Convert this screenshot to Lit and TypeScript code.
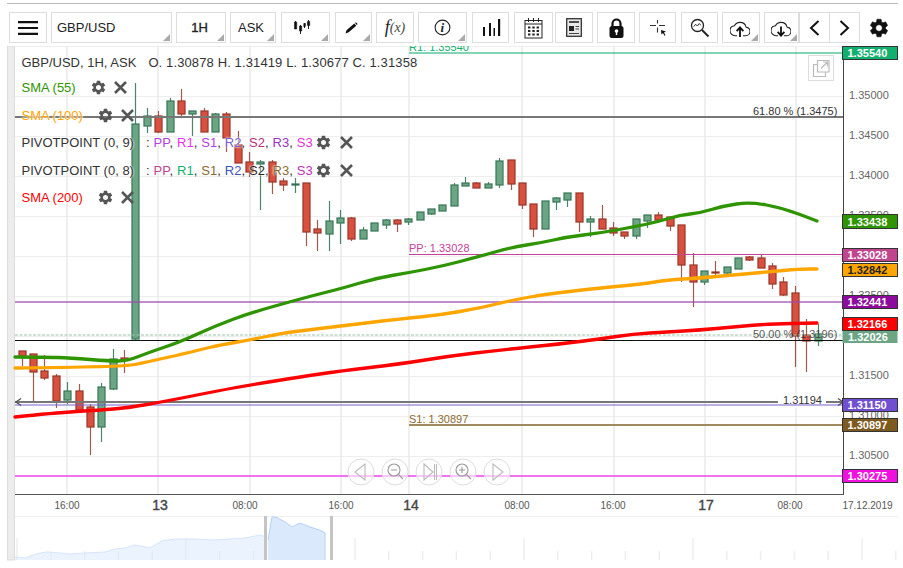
import { LitElement, html, css, svg } from "lit";
import { customElement } from "lit/decorators.js";

type Candle = [number, number, number, number, number];
// dir (1 up / 0 down), wickTop, wickBottom, bodyTop, bodyBottom
const CANDLES: Candle[] = [
  [0,351,366,351,356],[0,354,403,354,372],[0,355,380,371,378],[0,374,408,376,401],[1,382,404,391,400],
  [0,384,410,391,410],[0,404,455,407,427],[1,383,442,387,427],[1,349,390,359,389],[0,350,373,358,360],
  [1,83,340,124,339],[1,108,133,116,126],[0,111,133,116,132],[1,98,132,101,132],[0,89,116,101,114],
  [1,111,136,111,114],[0,108,132,111,132],[1,113,132,114,132],[0,112,152,114,138],[0,131,163,145,163],
  [0,152,177,162,172],[1,160,210,162,164],[0,160,194,162,182],[0,178,191,181,185],[1,178,193,184,185],
  [0,183,246,183,232],[0,220,251,229,233],[1,201,251,221,234],[1,210,244,218,223],[0,217,241,218,239],
  [1,227,239,230,239],[1,223,231,223,231],[1,219,229,220,225],[0,219,232,220,224],[1,218,225,219,222],
  [1,212,220,212,220],[1,209,215,209,214],[1,205,211,205,211],[1,183,206,185,206],[1,177,186,183,186],
  [0,182,188,183,188],[1,182,188,184,188],[1,158,188,161,185],[0,160,190,160,184],[0,183,209,183,205],
  [0,204,237,204,229],[1,201,229,201,229],[1,197,210,198,202],[1,193,207,193,200],[0,193,232,193,222],
  [1,216,237,219,222],[0,205,229,219,229],[0,222,236,228,233],[0,232,239,232,236],[1,219,239,219,236],
  [1,215,228,215,221],[0,212,220,215,220],[0,217,231,217,226],[0,225,282,225,265],[0,253,307,265,282],
  [1,271,285,271,282],[0,261,277,272,273],[1,267,276,267,273],[1,258,269,258,269],[0,256,261,257,260],
  [0,255,268,258,268],[0,263,289,266,284],[0,277,296,282,295],[0,286,367,293,336],[0,319,372,335,341],
  [1,324,346,334,341],
];
const SMA55 = "15,357 45,357 70,358 110,361 127,361 150,352 180,342 215,326 250,313 300,299 327,292 343,288 377,278 407,273 443,266 477,257 513,247 540,243 567,237 600,233 633,227 657,222 680,215 700,213 723,206 750,202 783,208 817,221";
const SMA100 = "15,368 123,367 147,362 187,353 203,349 220,345 250,340 283,333 300,331 340,326 400,319 440,315 480,308 513,300 547,294 600,288 643,284 667,280 700,278 733,275 767,272 800,269 817,269";
const SMA200 = "15,417 53,413 100,410 127,408 167,401 217,391 250,385 300,377 340,371 400,364 450,356 500,350 560,344 600,339 633,334 667,332 700,330 733,327 767,324 817,323";
const VGRID = [67, 158, 250, 341, 409, 522, 614, 705, 796];
const PRICES = [
  ["1.35000", 96], ["1.34500", 136], ["1.34000", 176], ["1.33500", 216], ["1.33000", 256],
  ["1.32500", 296], ["1.32000", 336], ["1.31500", 376], ["1.31000", 416], ["1.30500", 456],
] as [string, number][];
const TAGS = [
  ["1.35540", 46, 14, "#12b06f", "#fff"], ["1.33438", 214, 15, "#2e9400", "#fff"],
  ["1.33028", 248, 14, "#c0448e", "#fff"], ["1.32842", 263, 14, "#ffa500", "#222"],
  ["1.32441", 295, 14, "#8e0a9e", "#fff"], ["1.31150", 398, 14, "#7050d0", "#fff"],
  ["1.30897", 418, 14, "#7d5a20", "#fff"], ["1.30275", 469, 14, "#f010e0", "#fff"],
] as [string, number, number, string, string][];
const TIMES = [["16:00", 67], ["08:00", 245], ["16:00", 341], ["08:00", 517], ["16:00", 613], ["08:00", 790]] as [string, number][];
const DAYS = [["13", 160], ["14", 411], ["17", 706]] as [string, number][];
const GEAR = "M19.14 12.94c.04-.3.06-.61.06-.94 0-.32-.02-.64-.07-.94l2.03-1.58a.49.49 0 0 0 .12-.61l-1.92-3.32a.488.488 0 0 0-.59-.22l-2.39.96c-.5-.38-1.03-.7-1.62-.94l-.36-2.54a.484.484 0 0 0-.48-.41h-3.84c-.24 0-.43.17-.47.41l-.36 2.54c-.59.24-1.13.57-1.62.94l-2.39-.96c-.22-.08-.47 0-.59.22L2.74 8.87c-.12.21-.08.47.12.61l2.03 1.58c-.05.3-.09.63-.09.94s.02.64.07.94l-2.03 1.58a.49.49 0 0 0-.12.61l1.92 3.32c.12.22.37.29.59.22l2.39-.96c.5.38 1.03.7 1.62.94l.36 2.54c.05.24.24.41.48.41h3.84c.24 0 .44-.17.47-.41l.36-2.54c.59-.24 1.13-.56 1.62-.94l2.39.96c.22.08.47 0 .59-.22l1.92-3.32c.12-.22.07-.47-.12-.61l-2.01-1.58zM12 15.6c-1.98 0-3.6-1.62-3.6-3.6s1.62-3.6 3.6-3.6 3.6 1.62 3.6 3.6-1.62 3.6-3.6 3.6z";
const CLOUD = "M19.35 10.04C18.67 6.59 15.64 4 12 4 9.11 4 6.6 5.64 5.35 8.04 2.34 8.36 0 10.91 0 14c0 3.31 2.69 6 6 6h2.5M15.5 20H19c2.76 0 5-2.24 5-5 0-2.64-2.05-4.78-4.65-4.96";
const AREA_L = "15,557 26,558 36,554 46,552 60,553 70,554 85,553 105,552 115,549 125,548 135,545 150,548 162,541 175,539 195,539 215,540 245,538 260,535 266,537";
const AREA_R = "268,540 272,517 276,517 285,522 292,527 300,523 310,527 320,530 325,533 325,560";

/** Turns a point list into a path rounded through the segment midpoints. */
const smooth = (pts: string) => {
  const p = pts.split(" ").map((s) => s.split(",").map(Number));
  let d = `M${p[0][0]} ${p[0][1]}`;
  for (let i = 1; i < p.length - 1; i++) {
    const mx = (p[i][0] + p[i + 1][0]) / 2;
    const my = (p[i][1] + p[i + 1][1]) / 2;
    d += `Q${p[i][0]} ${p[i][1]} ${mx} ${my}`;
  }
  const last = p[p.length - 1];
  return `${d}L${last[0]} ${last[1]}`;
};

const gear = () => html`<svg class="lg-gear" viewBox="0 0 24 24"><path d=${GEAR}></path></svg>`;
const cross = () => html`<svg class="lg-x" viewBox="0 0 13 13"><path d="M1 1L12 12M12 1L1 12"></path></svg>`;
const pivots = (cols: string[]) => {
  const names = ["PP", "R1", "S1", "R2", "S2", "R3", "S3"];
  return html`<span class="sep">:</span><span class="names">${names.map(
    (n, i) => html`<span style="color:${cols[i]}">${n}</span>${i < 6 ? ", " : ""}`
  )}</span>`;
};

@customElement("app-root")
export class AppRoot extends LitElement {
  static styles = css`
    :host { display: block; width: 903px; height: 568px; background: #fff; overflow: hidden;
      font-family: "Liberation Sans", Arial, sans-serif; padding-top: 3px; box-sizing: border-box; }
    .bar { display: flex; align-items: flex-start; margin-left: 7px; width: 891px; box-sizing: border-box;
      border-top: 1px solid #bbb; padding: 8px 0 0 2px; height: 43px; }
    .btn { position: relative; box-sizing: border-box; height: 31px; border: 1px solid #ddd; margin-right: 4px;
      display: flex; align-items: center; justify-content: center; font-size: 13px; color: #222; flex: none; background: #fff; }
    .btn svg { display: block; }
    .tri::after { content: ""; position: absolute; right: 1px; bottom: 1px; width: 0; height: 0;
      border-left: 7px solid transparent; border-bottom: 7px solid #aaa; }
    .left { justify-content: flex-start; padding-left: 5px; }
    .bold { -webkit-text-stroke: .35px #222; padding-right: 3px; }
    .ask { padding-right: 4px; }
    .fx { font-family: "Liberation Serif", serif; font-style: italic; font-size: 18px; }
    .fx span { font-size: 14px; color: #444; }
    .tight { margin-right: 0; }
    .plain { border: none; margin: 0; }
    .stage { position: relative; width: 903px; height: 522px; }
    .chart { display: block; position: absolute; left: 0; top: 0; }
    .legend { position: absolute; left: 21.5px; top: 4px; font-size: 13px; color: #333; white-space: nowrap;
      display: flex; flex-direction: column; text-shadow: 0 0 2px #fff, 0 0 2px #fff; }
    .row { height: 27.5px; display: flex; align-items: center; white-space: pre; }
    .top { height: 24px; }
    .ohlc { margin-left: 12px; letter-spacing: .12px; }
    .lg-gear { width: 17px; height: 17px; fill: #555; flex: none; }
    .lg-x { width: 13px; height: 13px; fill: none; stroke: #555; stroke-width: 2.6; flex: none; margin-left: 7px; }
    .m55 { margin-left: 14px; }
    .m100 { margin-left: 14px; }
    .mp { margin-left: 2px; margin-right: 0; }
    .mp + .lg-gear + .lg-x { margin-left: 8px; }
    .sep { margin-left: 12px; margin-right: 4px; }
    .names { letter-spacing: .1px; }
    .sma55 { color: #2e9400; } .sma100 { color: #ffa500; } .sma200 { color: #f00; }
    .gl { stroke: #eee; stroke-width: 1; fill: none; }
    .glv { stroke: #eaeaea; stroke-width: 1.5; fill: none; }
    .ax { font-size: 11px; fill: #666; }
    .tm { font-size: 10px; fill: #555; text-anchor: middle; }
    .dy { font-size: 14px; fill: #444; stroke: #444; stroke-width: .4; text-anchor: middle; }
    .tag { font-size: 11px; font-weight: bold; }
    .nt { font-size: 11px; }
    .sma { fill: none; stroke-width: 3.3; stroke-linejoin: round; stroke-linecap: round; }
    .zb { fill: rgba(255,255,255,.6); stroke: #ddd; }
    .zi { fill: none; stroke: #bbb; stroke-width: 1.1; }
    .zm { fill: none; stroke: #999; stroke-width: 1.1; }
    .ex { fill: #fff; stroke: #ddd; }
    .exi { fill: none; stroke: #bbb; stroke-width: 1.2; }
    .tick { stroke: #eee; stroke-width: 1.5; }
    .info { font-family: "Liberation Serif", serif; font-style: italic; font-weight: bold; font-size: 13px; fill: #222; text-anchor: middle; }
  `;

  private hline(y: number, x1: number, color: string, w = 1, op = 1) {
    return svg`<line x1=${x1} x2="843" y1=${y} y2=${y} stroke=${color} stroke-width=${w} opacity=${op}></line>`;
  }

  private chart() {
    const xOf = (i: number) => Math.round(21.7 + 11.37 * i);
    return svg`
      <svg class="chart" width="903" height="522" viewBox="0 46 903 522">
        <rect x="7.5" y="46" width="7" height="514" fill="#ececec" stroke="#ddd"></rect>
        <line class="gl" x1="15" x2="843" y1="46.5" y2="46.5"></line>
        ${PRICES.map(([, y]) => svg`<line class="gl" x1="15" x2="843" y1=${y + 0.5} y2=${y + 0.5}></line>`)}
        ${VGRID.map((x) => svg`<line class="glv" x1=${x} x2=${x} y1="46" y2="494"></line>`)}

        ${CANDLES.map((c, i) => {
          const x = xOf(i) + 0.5;
          const up = c[0] === 1;
          const h = Math.max(c[4] - c[3], 1);
          return svg`
            <line x1=${x} x2=${x} y1=${c[1]} y2=${c[2]} stroke=${up ? "#2f6e50" : "#8a4035"} stroke-width="1.2" opacity=".85"></line>
            <rect x=${x - 4.5} y=${c[3] - 1} width="9" height=${h + 2} fill=${up ? "#6ba583" : "#d9503f"} opacity=".25"></rect>
            <rect x=${x - 3.5} y=${c[3]} width="7" height=${h} fill=${up ? "#6ba583" : "#d9503f"} stroke=${up ? "#2f6e50" : "#8c3327"} stroke-width="1"></rect>`;
        })}

        ${this.hline(53, 409, "#12b06f", 1.5, 0.7)}
        ${this.hline(117, 15, "#777", 2)}
        ${this.hline(254.5, 409, "#c8409a", 1)}
        ${this.hline(302, 15, "#a04ab0", 1.5, 0.85)}
        <line x1="15" x2="843" y1="335" y2="335" stroke="#9cc4ac" stroke-dasharray="3 1.5" stroke-width="1.2"></line>
        ${this.hline(340.5, 15, "#111", 1)}
        ${this.hline(402, 15, "#777", 2)}
        ${this.hline(405, 15, "#7a5fd0", 1.2)}
        ${this.hline(425, 409, "#a08a5f", 2)}
        ${this.hline(476, 15, "#ee44ee", 1.5)}

        <rect x="778" y="396" width="48" height="12" fill="#fff"></rect>
        <line x1="778" x2="826" y1="405" y2="405" stroke="#7a5fd0" stroke-width="1.2"></line>
        <path d="M21 398.5L16 402L21 405.5" fill="none" stroke="#555" stroke-width="1.4"></path>
        <path d="M838 398.5L843 402L838 405.5" fill="none" stroke="#555" stroke-width="1.4"></path>

        <path class="sma" d=${smooth(SMA100)} stroke="#ffa500"></path>
        <path class="sma" d=${smooth(SMA55)} stroke="#2e9400"></path>
        <path class="sma" d=${smooth(SMA200)} stroke="#f00"></path>

        <text class="nt" x="409" y="51" fill="#12b06f">R1: 1.35540</text>
        <text class="nt" x="409" y="252" fill="#c8409a">PP: 1.33028</text>
        <text class="nt" x="409" y="423" fill="#8a6a2d">S1: 1.30897</text>
        <text class="nt" x="753" y="115" fill="#333">61.80 % (1.3475)</text>
        <text class="nt" x="753" y="338" fill="#333" opacity=".8">50.00 % (1.3196)</text>
        <text class="nt" x="783" y="404" fill="#333">1.31194</text>

        <rect class="ex" x="808.5" y="55.5" width="25" height="25"></rect>
        <path class="exi" d="M817.5 64.5h-4v12h12v-4M817.5 60.5h11.5v11.5h-11.5zM821 68.5l6-6M823 62h4.5v4.5"></path>

        ${[361, 395, 429, 463, 497].map((cx) => svg`<circle class="zb" cx=${cx} cy="472" r="13"></circle>`)}
        <path class="zi" d="M365 464l-10 8l10 8z"></path>
        <circle class="zm" cx="394" cy="470" r="6"></circle>
        <path class="zm" d="M391 470h6M398.5 474.5l4.5 4.5"></path>
        <path class="zi" d="M424 464l9 8l-9 8zM434.5 464v16M436.5 464v16"></path>
        <circle class="zm" cx="462" cy="470" r="6"></circle>
        <path class="zm" d="M459 470h6M462 467v6M466.5 474.5l4.5 4.5"></path>
        <path class="zi" d="M493 464l10 8l-10 8z"></path>

        <line x1="843.5" x2="843.5" y1="46" y2="494.5" stroke="#444"></line>
        <line x1="15" x2="844" y1="494.5" y2="494.5" stroke="#555"></line>

        ${PRICES.map(([t, y]) => svg`<text class="ax" x="849" y=${y + 3}>${t}</text>`)}
        <rect x="842.5" y="331" width="55" height="12" fill="#6ba583"></rect>
        <text class="tag" x="848" y="341" fill="#fff">1.32026</text>
        ${TAGS.map(([t, y, h, bg, fg]) => svg`
          <rect x="842.5" y=${y + 0.5} width="55" height=${h - 1} fill=${bg} stroke="#333"></rect>
          <text class="tag" x="847.5" y=${y + h / 2 + 4} fill=${fg}>${t}</text>`)}
        <rect x="842.5" y="317.5" width="55" height="13" fill="#f00" stroke="#333"></rect>
        <text class="tag" x="847.5" y="328" fill="#fff">1.32166</text>

        ${TIMES.map(([t, x]) => svg`<text class="tm" x=${x} y="509">${t}</text>`)}
        ${DAYS.map(([t, x]) => svg`<text class="dy" x=${x} y="510">${t}</text>`)}
        <text class="tm" x="867.5" y="509">17.12.2019</text>

        <line x1="15" x2="898" y1="516.5" y2="516.5" stroke="#eee"></line>
        ${[17, 50.8, 84.6, 118.4, 152.2, 186, 219.8, 253.6, 287.4, 321.2, 355, 388.8, 422.6, 456.4, 490.2, 524, 557.8, 591.6, 625.4, 659.2, 693, 726.8, 760.6, 794.4, 828.2, 862, 895.8].map(
          (x, i) => svg`<line class="tick" x1=${x} x2=${x} y1=${i % 5 === 0 ? 538 : 551} y2="560"></line>`
        )}
        <polygon points="${AREA_L} 266,560 15,560" fill="#dbe9fd" opacity=".55"></polygon>
        <polyline points=${AREA_L} fill="none" stroke="#d6e5fb" stroke-width="1"></polyline>
        <polygon points="${AREA_R} 268,560" fill="#dbe9fd"></polygon>
        <polyline points=${AREA_R} fill="none" stroke="#b4d0f7" stroke-width="1"></polyline>
        <rect x="264" y="516" width="3" height="44" fill="#c4c4c4"></rect>
        <rect x="330" y="516" width="3" height="44" fill="#c4c4c4"></rect>
      </svg>`;
  }

  render() {
    return html`
      <div class="bar">
        <div class="btn" style="width:38px">
          <svg width="20" height="14" viewBox="0 0 20 14"><path d="M0 1.2H20M0 7H20M0 12.8H20" stroke="#111" stroke-width="2.2"></path></svg>
        </div>
        <div class="btn left tri" style="width:121px">GBP/USD</div>
        <div class="btn bold tri" style="width:50px">1H</div>
        <div class="btn ask tri" style="width:46px;margin-right:5px">ASK</div>
        <div class="btn tri" style="width:49px;margin-right:5px">
          <svg width="18" height="18" viewBox="0 0 18 18" style="margin-right:7px"><path d="M2.5 2v8M7.5 6v9M11.5 4v5M15.5 1v9" stroke="#222" stroke-width="1"></path><path d="M1.5 3h2.2v7H1.5zM6.5 7h2.2v5H6.5zM10.8 4.5h1.6v3h-1.6zM14.5 2.5h2.2v4h-2.2z" fill="#111" stroke="#111" stroke-width=".6"></path></svg>
        </div>
        <div class="btn tri" style="width:37px">
          <svg width="13" height="12" viewBox="0 0 13 12" style="margin-right:4px"><path d="M.5 11.5l1-3.2L9.3 1.6l2 2.2-7.6 6.5zM10 .9l1-.6 1.6 1.8-.7.9z" fill="#111"></path></svg>
        </div>
        <div class="btn fx" style="width:38px">f<span>(x)</span></div>
        <div class="btn tri" style="width:49px;margin-right:5px">
          <svg width="17" height="17" viewBox="0 0 17 17"><circle cx="8.5" cy="8.5" r="7.4" fill="none" stroke="#222" stroke-width="1.1"></circle><text class="info" x="8.3" y="12.8">i</text></svg>
        </div>
        <div class="btn" style="width:37px;margin-right:5px">
          <svg width="20" height="18" viewBox="0 0 20 18"><path d="M2 8h2v9H2zM8 4h2v13H8zM12.5 9h1.5v8h-1.5zM17 0h2.2v17H17z" fill="#111"></path></svg>
        </div>
        <div class="btn" style="width:39px;margin-right:2px">
          <svg width="19" height="22" viewBox="0 0 19 22"><rect x="1" y="3.5" width="17" height="17.5" fill="none" stroke="#222"></rect><path d="M1 7h17M4.5 1v4M9.5 1v4M14.5 1v4" stroke="#222"></path><path d="M4 9.5h2.4v2H4zM8.3 9.5h2.4v2H8.3zM12.6 9.5H15v2h-2.4zM4 13h2.4v2H4zM8.3 13h2.4v2H8.3zM12.6 13H15v2h-2.4zM4 16.5h2.4v2H4zM8.3 16.5h2.4v2H8.3zM12.6 16.5H15v2h-2.4z" fill="#222"></path></svg>
        </div>
        <div class="btn" style="width:38px">
          <svg width="16" height="19" viewBox="0 0 16 19"><rect x=".7" y=".7" width="14.6" height="17.6" fill="#e8e8e8" stroke="#333" stroke-width="1.3"></rect><path d="M3 4h10" stroke="#222" stroke-width="1.6"></path><path d="M3 8h5v5H3z" fill="#222"></path><path d="M9.5 8.5H13M9.5 11H13M3 15.5h10" stroke="#444"></path></svg>
        </div>
        <div class="btn" style="width:38px">
          <svg width="15" height="20" viewBox="0 0 15 20"><path d="M3.5 9V5.5a4 4 0 0 1 8 0V9" fill="none" stroke="#111" stroke-width="2.2"></path><rect x=".5" y="8" width="14" height="12" rx="2.5" fill="#111"></rect><circle cx="7.5" cy="13" r="1.8" fill="#fff"></circle><path d="M6.8 13.5h1.4v3.5H6.8z" fill="#fff"></path></svg>
        </div>
        <div class="btn" style="width:37px;margin-right:5px">
          <svg width="20" height="18" viewBox="0 0 20 18"><path d="M2 6.5h6M11 6.5h6M9.5 1v3.5M9.5 8.5v5" stroke="#333" stroke-width="1.1"></path><path d="M13 11l5 1.6-2 .8 1.4 2.8-1 .5-1.4-2.8-1.6 1.5z" fill="#111"></path></svg>
        </div>
        <div class="btn" style="width:37px">
          <svg width="20" height="20" viewBox="0 0 20 20"><circle cx="7.5" cy="7.5" r="6" fill="none" stroke="#222" stroke-width="1.3"></circle><path d="M12 12l6.5 6.5" stroke="#222" stroke-width="2"></path><path d="M3.8 8.6l1.8-2.4 1.8 1.8 1.7-2.5 1.8 1.7" fill="none" stroke="#333" stroke-width="1"></path></svg>
        </div>
        <div class="btn tri" style="width:38px">
          <svg width="20" height="18" viewBox="0 0 24 21.6" style="margin-right:2px"><path d=${CLOUD} fill="none" stroke="#222" stroke-width="1.3"></path><path d="M12 21.5V11M8 14.5L12 10l4 4.5" fill="none" stroke="#111" stroke-width="2.2"></path></svg>
        </div>
        <div class="btn tri tight" style="width:35px">
          <svg width="20" height="18" viewBox="0 0 24 21.6" style="margin-right:2px"><path d=${CLOUD} fill="none" stroke="#222" stroke-width="1.3"></path><path d="M12 9v10.5M8 15.5l4 4.5 4-4.5" fill="none" stroke="#111" stroke-width="2.2"></path></svg>
        </div>
        <div class="btn tight" style="width:31px">
          <svg width="11" height="16" viewBox="0 0 11 16"><path d="M9.5 1L2 8l7.5 7" fill="none" stroke="#111" stroke-width="2"></path></svg>
        </div>
        <div class="btn tight" style="width:31px;margin-left:-1px">
          <svg width="11" height="16" viewBox="0 0 11 16"><path d="M1.5 1L9 8l-7.5 7" fill="none" stroke="#111" stroke-width="2"></path></svg>
        </div>
        <div class="btn plain" style="width:38px">
          <svg width="22" height="22" viewBox="0 0 24 24"><path d=${GEAR} fill="#111" stroke="#111" stroke-width=".6"></path></svg>
        </div>
      </div>
      <div class="stage">
        ${this.chart()}
        <div class="legend">
          <div class="row top"><span>GBP/USD, 1H, ASK</span><span class="ohlc">O. 1.30878 H. 1.31419 L. 1.30677 C. 1.31358</span></div>
          <div class="row sma55"><span>SMA (55)</span><span class="m55"></span>${gear()}${cross()}</div>
          <div class="row sma100"><span>SMA (100)</span><span class="m100"></span>${gear()}${cross()}</div>
          <div class="row"><span>PIVOTPOINT (0, 9)</span>${pivots(["#b040e0", "#ef2ef2", "#b53de0", "#7a5fd0", "#b83080", "#9a30c0", "#e030e0"])}<span class="mp"></span>${gear()}${cross()}</div>
          <div class="row"><span>PIVOTPOINT (0, 8)</span>${pivots(["#c0448e", "#12b06f", "#8a6a2d", "#3f55b5", "#2a2a2a", "#8a6a2d", "#c030c0"])}<span class="mp"></span>${gear()}${cross()}</div>
          <div class="row sma200"><span>SMA (200)</span><span class="m100"></span>${gear()}${cross()}</div>
        </div>
      </div>`;
  }
}
